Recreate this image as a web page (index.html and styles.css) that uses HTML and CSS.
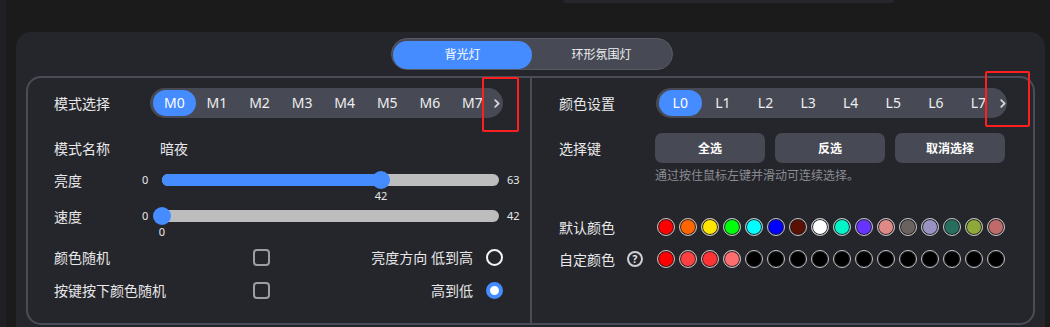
FILE: index.html
```html
<!DOCTYPE html>
<html lang="zh-CN">
<head>
<meta charset="utf-8">
<title>背光灯设置</title>
<link rel="stylesheet" href="styles.css">
</head>
<body>
<div class="topbar"></div>
<div class="card">
  <div class="tabs">
    <div class="tab active">背光灯</div>
    <div class="tab">环形氛围灯</div>
  </div>
  <div class="panel">
    <div class="col col-left">
      <div class="row r-pill">
        <span class="label w96">模式选择</span>
        <div class="pill pill-l">
          <div class="pill-view">
            <span class="seg active">M0</span><span class="seg">M1</span><span class="seg">M2</span><span class="seg">M3</span><span class="seg">M4</span><span class="seg">M5</span><span class="seg">M6</span><span class="seg">M7</span>
          </div>
          <span class="chev"><svg width="6" height="9" viewBox="0 0 6 9"><path d="M1.2 1.2L4.6 4.5L1.2 7.8" stroke="#d2d3d7" stroke-width="1.8" fill="none" stroke-linecap="round" stroke-linejoin="round"/></svg></span>
        </div>
      </div>
      <div class="row r-name">
        <span class="label w106">模式名称</span>
        <span class="value">暗夜</span>
      </div>
      <div class="row r-slider a">
        <span class="label w88">亮度</span>
        <span class="num min">0</span>
        <div class="track" style="--p:65%">
          <div class="fill"></div>
          <div class="thumb"><span class="tip">42</span></div>
        </div>
        <span class="num max">63</span>
      </div>
      <div class="row r-slider b">
        <span class="label w88">速度</span>
        <span class="num min">0</span>
        <div class="track" style="--p:0%">
          <div class="fill"></div>
          <div class="thumb"><span class="tip">0</span></div>
        </div>
        <span class="num max">42</span>
      </div>
      <div class="row r-check a">
        <span class="label w199">颜色随机</span>
        <span class="checkbox"></span>
        <span class="opt">亮度方向 低到高</span>
        <span class="radio"></span>
      </div>
      <div class="row r-check b">
        <span class="label w199">按键按下颜色随机</span>
        <span class="checkbox"></span>
        <span class="opt">高到低</span>
        <span class="radio on"></span>
      </div>
    </div>
    <div class="divider"></div>
    <div class="col col-right">
      <div class="row r-pill">
        <span class="label w97">颜色设置</span>
        <div class="pill pill-r">
          <div class="pill-view">
            <span class="seg active">L0</span><span class="seg">L1</span><span class="seg">L2</span><span class="seg">L3</span><span class="seg">L4</span><span class="seg">L5</span><span class="seg">L6</span><span class="seg">L7</span>
          </div>
          <span class="chev"><svg width="6" height="9" viewBox="0 0 6 9"><path d="M1.2 1.2L4.6 4.5L1.2 7.8" stroke="#d2d3d7" stroke-width="1.8" fill="none" stroke-linecap="round" stroke-linejoin="round"/></svg></span>
        </div>
      </div>
      <div class="row r-keys">
        <span class="label w96">选择键</span>
        <div class="btns">
          <button class="btn">全选</button>
          <button class="btn">反选</button>
          <button class="btn">取消选择</button>
        </div>
      </div>
      <div class="hint">通过按住鼠标左键并滑动可连续选择。</div>
      <div class="row r-sw a">
        <span class="label w98">默认颜色</span>
        <div class="swatches">
          <span class="sw" style="background:#ff0000"></span>
          <span class="sw" style="background:#ff6600"></span>
          <span class="sw" style="background:#ffe600"></span>
          <span class="sw" style="background:#00ff0a"></span>
          <span class="sw" style="background:#00ffff"></span>
          <span class="sw" style="background:#0000ff"></span>
          <span class="sw" style="background:#5a1002"></span>
          <span class="sw" style="background:#ffffff"></span>
          <span class="sw" style="background:#00f5c8"></span>
          <span class="sw" style="background:#6633ff"></span>
          <span class="sw" style="background:#e08a88"></span>
          <span class="sw" style="background:#6a625e"></span>
          <span class="sw" style="background:#9a92c2"></span>
          <span class="sw" style="background:#286e60"></span>
          <span class="sw" style="background:#8fa83a"></span>
          <span class="sw" style="background:#c06b6b"></span>
        </div>
      </div>
      <div class="row r-sw b">
        <span class="label w98"><span>自定颜色</span><span class="help">?</span></span>
        <div class="swatches">
          <span class="sw" style="background:#ff0000"></span>
          <span class="sw" style="background:#ff4040"></span>
          <span class="sw" style="background:#ff3333"></span>
          <span class="sw" style="background:#ff6e6e"></span>
          <span class="sw" style="background:#000"></span>
          <span class="sw" style="background:#000"></span>
          <span class="sw" style="background:#000"></span>
          <span class="sw" style="background:#000"></span>
          <span class="sw" style="background:#000"></span>
          <span class="sw" style="background:#000"></span>
          <span class="sw" style="background:#000"></span>
          <span class="sw" style="background:#000"></span>
          <span class="sw" style="background:#000"></span>
          <span class="sw" style="background:#000"></span>
          <span class="sw" style="background:#000"></span>
          <span class="sw" style="background:#000"></span>
        </div>
      </div>
    </div>
  </div>
</div>
<div class="mark m1"></div>
<div class="mark m2"></div>
</body>
</html>
```

FILE: styles.css
```css
html, body {
  margin: 0;
  padding: 0;
  overflow: hidden;
}
body {
  background: #1b1b1c;
  border-left: 6px solid #1f2023;
  height: 327px;
  box-sizing: border-box;
  font-family: "Noto Sans", "Noto Sans CJK SC", sans-serif;
  color: #e8e8ea;
  font-size: 14px;
}
.topbar {
  margin-left: 557px;
  width: 331px;
  height: 3px;
  background: #26272c;
  border-radius: 0 0 4px 4px;
}
.card {
  margin-top: 29px;
  margin-left: 10px;
  width: 1029px;
  height: 295px;
  box-sizing: border-box;
  background: #25262b;
  border-radius: 15px 15px 0 0;
  padding: 6px 10px 0;
}
.tabs {
  display: flex;
  width: 282px;
  height: 32px;
  box-sizing: border-box;
  margin-left: 365px;
  background: #474a54;
  border: 1px solid #565962;
  border-radius: 16px;
  padding: 1px;
}
.tab {
  flex: 1;
  height: 28px;
  line-height: 28px;
  margin-top: 1px;
  text-align: center;
  font-size: 12px;
  color: #eeeef0;
  border-radius: 14px;
}
.tab.active {
  background: #448cff;
  color: #fff;
}
.panel {
  margin-top: 6px;
  height: 249px;
  box-sizing: border-box;
  border: 2px solid #4a4d57;
  border-radius: 15px;
  display: grid;
  grid-template-columns: 502px 2px 1fr;
}
.divider {
  background: #4a4d57;
}
.col-left {
  padding: 10px 27px 0 26px;
}
.col-right {
  padding: 10px 26px 0 27px;
}
.row {
  display: flex;
  align-items: center;
}
.label {
  flex: none;
  font-size: 14px;
  color: #e8e8ea;
  white-space: nowrap;
}
.w88 { width: 88px; }
.w96 { width: 96px; }
.w97 { width: 97px; }
.w98 { width: 98px; display: flex; align-items: center; }
.w106 { width: 106px; }
.w199 { width: 199px; }

.r-pill { height: 30px; }
.pill {
  display: flex;
  align-items: center;
  height: 30px;
  box-sizing: border-box;
  background: #474a54;
  border-radius: 15px;
  padding: 2px 3px;
}
.pill-l { width: 353px; }
.pill-r { width: 351px; padding-right: 1px; }
.pill-view {
  flex: 1;
  min-width: 0;
  overflow: hidden;
  display: flex;
}
.seg {
  flex: 0 0 42.6px;
  height: 26px;
  line-height: 26px;
  text-align: center;
  font-size: 14px;
  color: #eeeef0;
  border-radius: 13px;
}
.seg.active {
  background: #448cff;
  color: #fff;
}
.chev {
  flex: 0 0 18px;
  display: flex;
  justify-content: flex-end;
  align-items: center;
}
.pill-r .chev { flex-basis: 21px; }

.r-name { height: 30px; margin-top: 15px; }
.value { font-size: 14px; color: #e8e8ea; }

.r-slider { height: 26px; }
.r-slider.a { margin-top: 4px; }
.r-slider.b { margin-top: 10px; }
.num {
  font-size: 11px;
  color: #e8e8ea;
  line-height: 12px;
}
.num.min { width: 20px; flex: none; }
.num.max { margin-left: 8px; }
.track {
  position: relative;
  flex: none;
  width: 337px;
  height: 12px;
  background: #bdbdbe;
  border-radius: 6px;
}
.fill {
  position: absolute;
  left: 0;
  top: 0;
  bottom: 0;
  width: var(--p);
  background: #448cff;
  border-radius: 6px;
}
.thumb {
  position: absolute;
  left: var(--p);
  top: 50%;
  width: 18px;
  height: 18px;
  margin-left: -9px;
  margin-top: -9px;
  background: #448cff;
  border-radius: 50%;
}
.tip {
  position: absolute;
  top: 100%;
  left: 50%;
  transform: translateX(-50%);
  margin-top: 1px;
  font-size: 11px;
  line-height: 12px;
  color: #e8e8ea;
}

.r-check { height: 32px; }
.r-check.a { margin-top: 12px; }
.r-check.b { margin-top: 1px; }
.checkbox {
  width: 17px;
  height: 17px;
  box-sizing: border-box;
  border: 2px solid #9d9ea2;
  border-radius: 4px;
  flex: none;
}
.opt {
  margin-left: auto;
  font-size: 14px;
  color: #e8e8ea;
}
.radio {
  margin-left: 13px;
  width: 17px;
  height: 17px;
  box-sizing: border-box;
  border: 2px solid #f4f4f4;
  border-radius: 50%;
  flex: none;
}
.radio.on {
  border: 4.5px solid #448cff;
  background: #fff;
}

.r-keys { height: 30px; margin-top: 15px; }
.btns { display: flex; gap: 10px; }
.btn {
  width: 110px;
  height: 30px;
  border: 0;
  border-radius: 7px;
  background: #474a54;
  color: #fff;
  font-family: "Noto Sans", "Noto Sans CJK SC", sans-serif;
  font-size: 12px;
  font-weight: 700;
  padding: 0;
}
.hint {
  margin-top: 6px;
  margin-left: 96px;
  font-size: 12px;
  line-height: 14px;
  color: #8a8c93;
}
.r-sw { height: 22px; }
.r-sw.a { margin-top: 33px; }
.r-sw.b { margin-top: 10px; }
.help {
  margin-left: 12px;
  width: 16px;
  height: 16px;
  box-sizing: border-box;
  border: 2px solid #cfd0d3;
  border-radius: 50%;
  font-size: 10px;
  font-weight: 700;
  line-height: 12px;
  text-align: center;
  color: #e6e6e8;
}
.swatches {
  display: flex;
  gap: 4px;
}
.sw {
  width: 18px;
  height: 18px;
  box-sizing: border-box;
  border-radius: 50%;
  border: 1.5px solid #c4c4c6;
  box-shadow: inset 0 0 0 1px #1e1f23;
}

.mark {
  position: absolute;
  box-sizing: border-box;
  border: 2px solid #ff1f1f;
  border-radius: 2px;
}
.m1 { left: 482px; top: 77px; width: 37px; height: 55px; }
.m2 { left: 985px; top: 71px; width: 45px; height: 56px; }
```
